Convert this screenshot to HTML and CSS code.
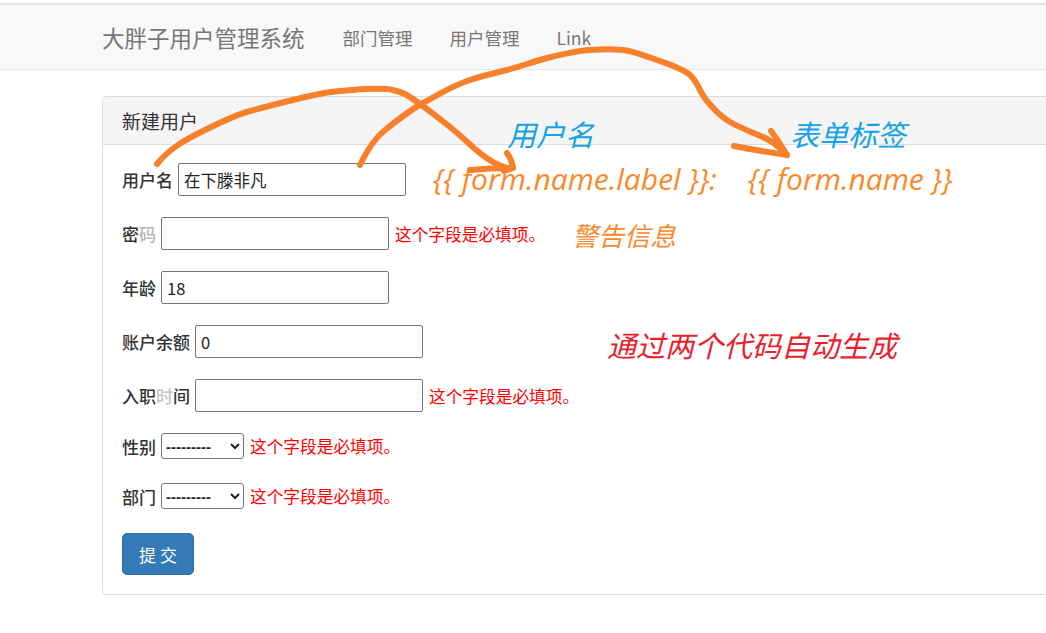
FILE: index.html
```html
<!DOCTYPE html>
<html lang="zh-CN">

<head>
    <meta charset="UTF-8">
    <meta name="viewport" content="width=device-width, initial-scale=1.0">
    <title>新建用户</title>
    <link rel="stylesheet" href="styles.css">
</head>

<body>
    <div class="page">
        <nav class="navbar">
            <a class="brand" href="#">大胖子用户管理系统</a>
            <ul class="nav">
                <li><a href="#">部门管理</a></li>
                <li><a href="#">用户管理</a></li>
                <li><a href="#">Link</a></li>
            </ul>
        </nav>

        <div class="panel">
            <div class="panel-heading">新建用户</div>
            <form class="panel-body">
                <div class="row">
                    <label>用户名</label>
                    <input class="w1" type="text" value="在下滕非凡">
                </div>
                <div class="row">
                    <label>密<span class="faded">码</span></label>
                    <input type="password">
                    <span class="err">这个字段是必填项。</span>
                </div>
                <div class="row">
                    <label>年龄</label>
                    <input type="text" value="18">
                </div>
                <div class="row">
                    <label>账户余额</label>
                    <input type="text" value="0">
                </div>
                <div class="row">
                    <label>入职<span class="faded2">时</span>间</label>
                    <input type="text">
                    <span class="err">这个字段是必填项。</span>
                </div>
                <div class="row sel">
                    <label>性别</label>
                    <select>
                        <option>---------</option>
                        <option>男</option>
                        <option>女</option>
                    </select>
                    <span class="err">这个字段是必填项。</span>
                </div>
                <div class="row sel">
                    <label>部门</label>
                    <select>
                        <option>---------</option>
                    </select>
                    <span class="err">这个字段是必填项。</span>
                </div>
                <button class="btn" type="submit">提 交</button>
            </form>
        </div>

        <!-- 标注 -->
        <div class="notes">
            <span class="note blue n-label">用户名</span>
            <span class="note blue n-widget">表单标签</span>
            <span class="note orange code n-code1">{{ form.name.label }}:</span>
            <span class="note orange code n-code2">{{ form.name }}</span>
            <span class="note orange n-warn">警告信息</span>
            <span class="note red n-auto">通过两个代码自动生成</span>

            <svg class="strokes" width="1046" height="633" viewBox="0 0 1046 633">
                <g fill="none" stroke="#f7812a" stroke-width="6" stroke-linecap="round" stroke-linejoin="round">
                    <path d="M157,161 C170,145 185,137 203,128 S235,112 250,108 S280,100 297,96 S325,89 340,88 S380,84 393,87 S410,94 420,101 S440,116 450,124 S465,137 475,146 S495,162 510,166" />
                    <path d="M507,150 Q512,157 513,165 L504,168" />
                    <path d="M470,167 Q492,165 513,165" />
                    <path d="M360,162 C368,145 375,135 385,127 S410,107 423,100 S450,84 467,78 S495,70 507,67 S535,58 547,55 S575,48 590,47 S612,46 623,47 S645,53 657,57 S682,65 690,72 S700,90 707,98 S718,112 730,119 S755,130 767,136 S780,146 787,152" />
                    <path d="M771,128 Q780,140 787,152" />
                    <path d="M734,143 Q760,148 787,152" />
                </g>
            </svg>
        </div>
    </div>
</body>

</html>
```

FILE: styles.css
```css
html,
body {
    margin: 0;
    padding: 0;
}

body {
    font-family: "Noto Sans CJK SC", "Liberation Sans", sans-serif;
    color: #333;
    background: #fff;
    overflow: hidden;
}

.page {
    position: relative;
    width: 1046px;
    height: 633px;
}

/* 导航条 */
.navbar {
    display: flex;
    align-items: center;
    margin-top: 3px;
    height: 64px;
    padding-left: 102px;
    background: #f8f8f8;
    border-top: 2px solid #e3e3e3;
    border-bottom: 1px solid #e7e7e7;
}

.navbar a {
    text-decoration: none;
    color: #777;
}

.brand {
    font-size: 22.5px;
    margin-right: 38px;
}

.nav {
    display: flex;
    gap: 37px;
    list-style: none;
    margin: 0;
    padding: 0;
    font-size: 17.5px;
}

/* 面板 */
.panel {
    margin-top: 26px;
    margin-left: 102px;
    width: 980px;
    border: 1px solid #ddd;
    border-radius: 4px;
}

.panel-heading {
    height: 47px;
    line-height: 47px;
    padding-left: 19px;
    font-size: 19px;
    background: #f5f5f5;
    border-bottom: 1px solid #ddd;
    border-radius: 4px 4px 0 0;
}

.panel-body {
    padding: 18px 19px 19px;
}

.row {
    display: flex;
    align-items: center;
    height: 33px;
    margin-bottom: 21px;
}

.row.sel {
    height: 26px;
    margin-bottom: 24px;
}

.row label {
    font-size: 17px;
    font-weight: 500;
    color: #333;
    margin-right: 5px;
}

.faded {
    color: #b4b4b4;
}

.faded2 {
    color: #c4c4c4;
}

.row input {
    box-sizing: border-box;
    width: 228px;
    height: 33px;
    border: 1px solid #767676;
    border-radius: 2px;
    padding: 0 5px;
    font-family: "Noto Sans CJK SC", "Liberation Sans", sans-serif;
    font-size: 16.5px;
    color: #222;
}

.row select {
    box-sizing: border-box;
    width: 83px;
    height: 26px;
    border: 1px solid #767676;
    border-radius: 3px;
    font-family: "Liberation Sans", sans-serif;
    font-size: 15px;
    font-weight: 700;
    color: #222;
    background: #fff;
}

.err {
    margin-left: 6px;
    font-size: 16.7px;
    color: #f00;
}

.btn {
    width: 72px;
    height: 42px;
    background: #337ab7;
    border: 1px solid #2e6da4;
    border-radius: 5px;
    color: #fff;
    font-family: "Noto Sans CJK SC", sans-serif;
    font-size: 17px;
}

/* 手写标注 */
.notes {
    position: absolute;
    left: 0;
    top: 0;
    width: 1046px;
    height: 633px;
    pointer-events: none;
}

.strokes {
    position: absolute;
    left: 0;
    top: 0;
}

.note {
    position: absolute;
    font-style: italic;
    white-space: nowrap;
    line-height: 1;
}

.blue {
    color: #16a2e5;
    font-size: 29px;
}

.orange {
    color: #f98a2c;
}

.red {
    color: #e81f2d;
    font-size: 29px;
}

.code {
    font-family: "Open Sans", "Noto Sans", sans-serif;
    font-weight: 400;
    font-size: 30px;
}

.n-label {
    left: 507px;
    top: 116px;
}

.n-widget {
    left: 790px;
    top: 116px;
}

.n-code1 {
    left: 433px;
    top: 161px;
}

.n-code2 {
    left: 748px;
    top: 161px;
}

.n-warn {
    left: 572px;
    top: 219px;
    font-size: 26px;
}

.n-auto {
    left: 607px;
    top: 327px;
}
```
